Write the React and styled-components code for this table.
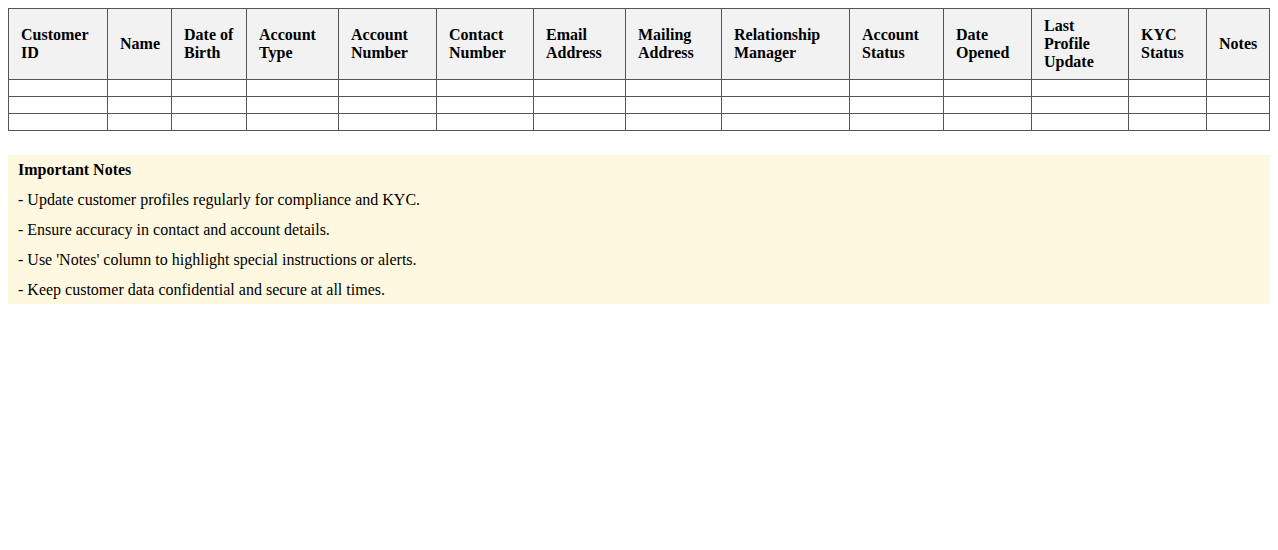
import React from "react";
import styled, { createGlobalStyle } from "styled-components";

const GlobalStyle = createGlobalStyle`
  body {
    margin: 8px;
    font-family: "Liberation Serif", "Times New Roman", serif;
    font-size: 16px;
    color: #000;
    background: #fff;
  }
`;

const TableStyled = styled.table`
  width: 100%;
  border-collapse: collapse;
  table-layout: fixed;
`;

const HeadCell = styled.th`
  border: 1px solid #555;
  background-color: #f2f2f2;
  padding: 8px 12px;
  text-align: left;
  font-weight: 700;
  line-height: 18px;
  vertical-align: middle;
`;

const BodyCell = styled.td`
  border: 1px solid #555;
  padding: 8px 12px;
`;

const NotesBox = styled.div`
  margin-top: 24px;
  background-color: #fff8e1;
  padding: 6px 10px 5px;
  display: flex;
  flex-direction: column;
  gap: 12px;
  line-height: 18px;
`;

const NoteTitle = styled.div`
  font-weight: 700;
`;

const NoteLine = styled.div``;

// widths measured from the layout; last column takes what is left
const columns = [
  { label: "Customer ID", width: 99 },
  { label: "Name", width: 64 },
  { label: "Date of Birth", width: 75 },
  { label: "Account Type", width: 92 },
  { label: "Account Number", width: 98 },
  { label: "Contact Number", width: 97 },
  { label: "Email Address", width: 92 },
  { label: "Mailing Address", width: 96 },
  { label: "Relationship Manager", width: 128 },
  { label: "Account Status", width: 94 },
  { label: "Date Opened", width: 88 },
  { label: "Last Profile Update", width: 97 },
  { label: "KYC Status", width: 78 },
  { label: "Notes" },
];

const notes = [
  "- Update customer profiles regularly for compliance and KYC.",
  "- Ensure accuracy in contact and account details.",
  "- Use 'Notes' column to highlight special instructions or alerts.",
  "- Keep customer data confidential and secure at all times.",
];

const App = () => {
  return (
    <>
      <GlobalStyle />
      <TableStyled>
        <colgroup>
          {columns.map((c) => (
            <col
              key={c.label}
              style={c.width ? { width: c.width + "px" } : undefined}
            />
          ))}
        </colgroup>
        <thead>
          <tr>
            {columns.map((c) => (
              <HeadCell key={c.label}>{c.label}</HeadCell>
            ))}
          </tr>
        </thead>
        <tbody>
          {[0, 1, 2].map((r) => (
            <tr key={r}>
              {columns.map((c) => (
                <BodyCell key={c.label}></BodyCell>
              ))}
            </tr>
          ))}
        </tbody>
      </TableStyled>

      <NotesBox>
        <NoteTitle>Important Notes</NoteTitle>
        {notes.map((n) => (
          <NoteLine key={n}>{n}</NoteLine>
        ))}
      </NotesBox>
    </>
  );
};

export default App;
